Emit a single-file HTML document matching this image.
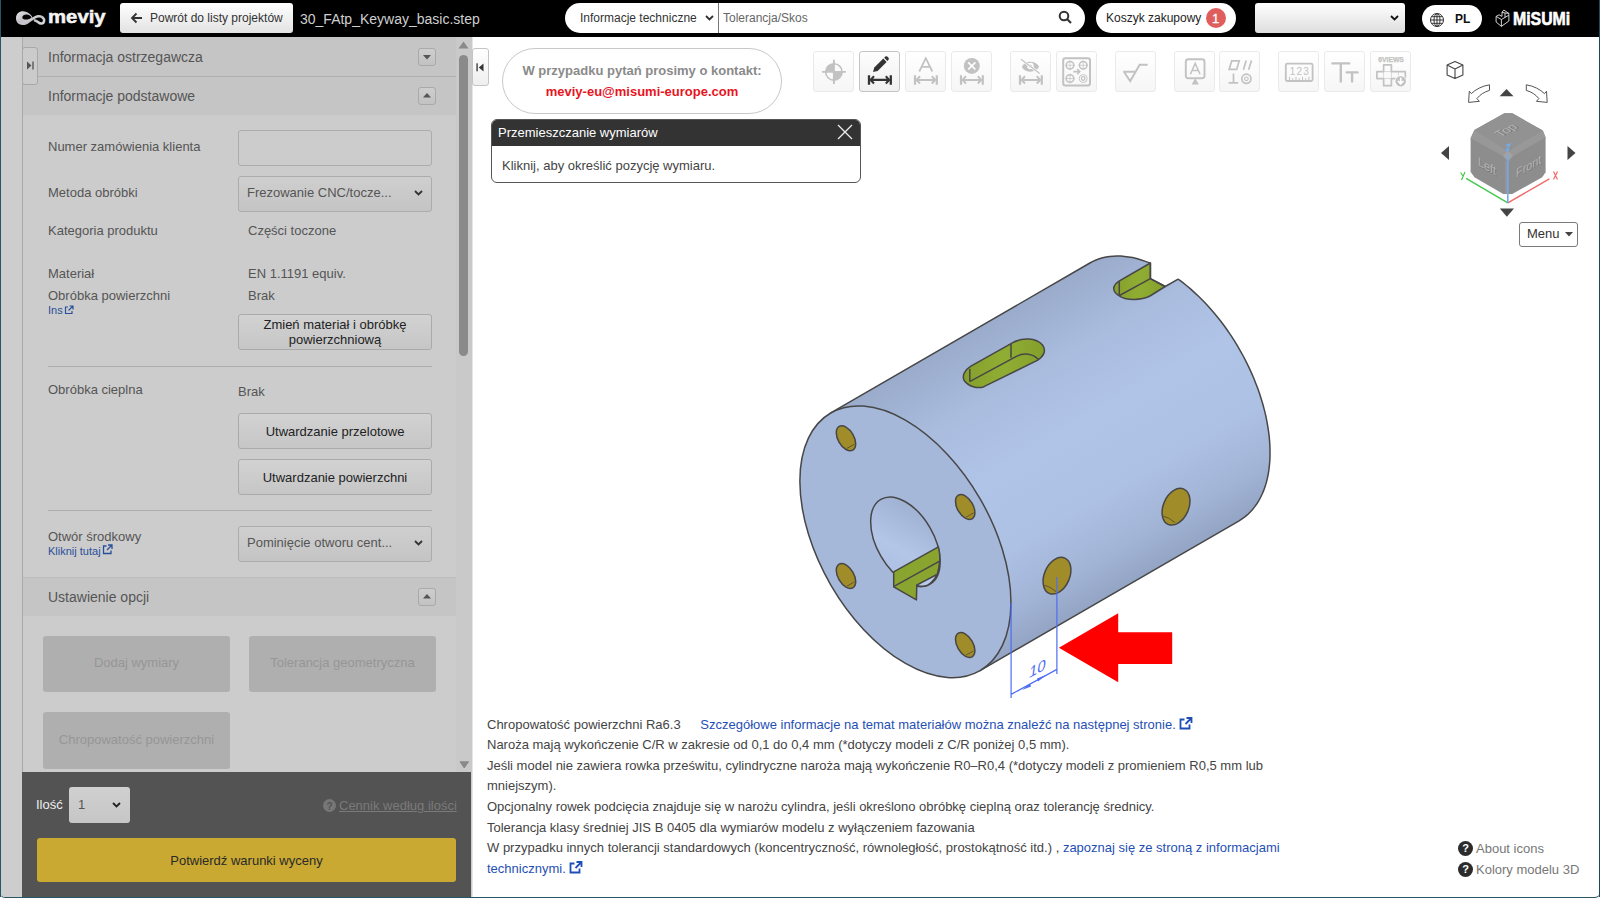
<!DOCTYPE html>
<html><head><meta charset="utf-8">
<style>
*{box-sizing:border-box;margin:0;padding:0}
html,body{width:1600px;height:900px;overflow:hidden;background:#fff;font-family:"Liberation Sans",sans-serif;font-size:13px;color:#333}
.a{position:absolute}
.t{position:absolute;white-space:nowrap;line-height:15px}
#frame{position:absolute;left:0;top:0;width:1600px;height:898px;background:#2a5566;border-radius:0 0 5px 5px}
#fl{position:absolute;left:0;top:0;width:1px;height:897px;background:#1f5a66}
#fr{position:absolute;left:1599px;top:0;width:1px;height:897px;background:#1f4a5a}
#app{position:absolute;left:0;top:0;width:1600px;height:897px;background:#fff;border-radius:0 0 5px 5px;overflow:hidden}
#hdr{position:absolute;left:0;top:0;width:1600px;height:37px;background:#000}
.pill{position:absolute;background:#fff;border-radius:16px}
.btn{position:absolute;border:1px solid #aaa;border-radius:3px;background:linear-gradient(#d2d2d2,#c6c6c6);text-align:center;color:#222}
.tb{position:absolute;top:51px;width:41px;height:41px;border:1px solid #eaeaea;border-radius:3px;background:linear-gradient(#fff,#f6f6f6)}
</style></head><body>
<div id="frame"></div>
<div id="app">
 <!-- HEADER -->
 <div id="hdr">
  <svg class="a" style="left:12px;top:6px" width="40" height="24" viewBox="12 6 40 24">
   <defs><linearGradient id="lg1" x1="0" y1="0" x2="1" y2="1"><stop offset="0" stop-color="#e6e6ea"/><stop offset=".5" stop-color="#c2c0c6"/><stop offset="1" stop-color="#dcdce0"/></linearGradient></defs>
   <path fill-rule="evenodd" fill="url(#lg1)" d="M16 18.2 C16 13.5 19.5 11.2 23 11.3 C27 11.4 30.5 14 32.3 17 C31 20.5 27.5 24.6 23.3 24.9 C19.3 25.2 16 22.5 16 18.2 Z M22.3 17.6 C22.3 15.6 24.5 14.5 26.5 14.6 C28.5 14.7 30.5 15.8 31.6 17.4 C30 18.8 28 19.6 26 19.6 C24 19.6 22.3 19 22.3 17.6 Z"/>
   <path d="M25 23.6 C29.5 22.5 33 16.5 38.7 16.3 C42.3 16.2 44.6 18.6 44.1 21.3 C43.6 23.8 40.5 24.2 38.3 22.3 C37.3 21.5 36.3 20.8 35 20.5" fill="none" stroke="url(#lg1)" stroke-width="2.6" stroke-linecap="round"/>
  </svg>
  <div class="t" style="left:47.5px;top:7.2px;font-size:18px;line-height:20px;font-weight:bold;color:#f4f4f4;transform:scaleX(1.13);transform-origin:left;-webkit-text-stroke:0.5px #f4f4f4">meviy</div>
  <div class="a" style="left:120px;top:3px;width:173px;height:30px;border-radius:3px;background:linear-gradient(#fff,#e2e2e2)"></div>
  <svg class="a" style="left:130px;top:12px" width="13" height="12" viewBox="0 0 13 12"><path d="M12 6H2M6.5 1.5L2 6l4.5 4.5" fill="none" stroke="#333" stroke-width="1.8"/></svg>
  <div class="t" style="left:150px;top:11px;font-size:12px;color:#333">Powrót do listy projektów</div>
  <div class="t" style="left:300px;top:11px;font-size:14px;line-height:16px;color:#cfcfcf">30_FAtp_Keyway_basic.step</div>
  <div class="pill" style="left:565px;top:2.5px;width:520px;height:30.5px;border-radius:15px"></div>
  <div class="t" style="left:580px;top:11px;font-size:12px;color:#333">Informacje techniczne</div>
  <svg class="a" style="left:705px;top:15px" width="9" height="6" viewBox="0 0 9 6"><path d="M1 1l3.5 3.5L8 1" fill="none" stroke="#333" stroke-width="1.8"/></svg>
  <div class="a" style="left:718px;top:3px;width:1px;height:30px;background:#777"></div>
  <div class="t" style="left:723px;top:11px;font-size:12px;color:#666">Tolerancja/Skos</div>
  <svg class="a" style="left:1058px;top:10px" width="15" height="14" viewBox="0 0 15 14"><circle cx="6" cy="6" r="4.3" fill="none" stroke="#333" stroke-width="2"/><path d="M9 9l4 4" stroke="#333" stroke-width="2.2"/></svg>
  <div class="pill" style="left:1095.5px;top:3px;width:140px;height:30px;border-radius:15px"></div>
  <div class="t" style="left:1106px;top:11px;font-size:12px;color:#222">Koszyk zakupowy</div>
  <div class="a" style="left:1205.5px;top:8px;width:20px;height:20px;border-radius:50%;background:#e05d5d"></div>
  <div class="t" style="left:1205.5px;top:10.5px;width:20px;text-align:center;font-size:13px;color:#fff;-webkit-text-stroke:0.3px #fff">1</div>
  <div class="a" style="left:1255px;top:3px;width:150px;height:30px;border-radius:3px;background:linear-gradient(#fff,#dedede)"></div>
  <svg class="a" style="left:1390px;top:15px" width="9" height="6" viewBox="0 0 9 6"><path d="M1 1l3.5 3.5L8 1" fill="none" stroke="#111" stroke-width="1.8"/></svg>
  <div class="pill" style="left:1422px;top:5px;width:60px;height:27px;border-radius:14px"></div>
  <svg class="a" style="left:1429px;top:12px" width="16" height="16" viewBox="0 0 16 16"><g fill="none" stroke="#333" stroke-width="1"><circle cx="8" cy="8" r="6.5"/><ellipse cx="8" cy="8" rx="3" ry="6.5"/><path d="M1.5 8h13M2.5 4.7h11M2.5 11.3h11M8 1.5v13"/></g></svg>
  <div class="t" style="left:1455px;top:12px;font-size:12px;line-height:14px;font-weight:bold;color:#111">PL</div>
  <svg class="a" style="left:1490px;top:5px" width="22" height="25" viewBox="1490 5 22 25"><g fill="none" stroke="#e8e8e8" stroke-width="0.9" stroke-linejoin="round"><path d="M1496.1 16.4L1499 14.8L1502 16.4V12.2L1503.8 10.1L1508.9 13.4V21L1501.4 26.4L1496.1 22Z"/><path d="M1496.1 16.4L1501.4 19.5V26.4M1501.4 19.5L1505 17.4V13M1502 12.2L1505 13L1508.9 13.4M1505 17.4L1508.9 15.2"/></g></svg>
  <div class="t" style="left:1512.5px;top:8.5px;font-size:18px;line-height:20px;font-weight:bold;color:#fff;transform:scaleX(0.88);transform-origin:left;-webkit-text-stroke:0.6px #fff">MiSUMi</div>
 </div>

 <!-- LEFT PANEL -->
 <div class="a" style="left:0;top:37px;width:472px;height:860px;background:#cdcdcd"></div>
 <div class="a" style="left:472px;top:37px;width:1px;height:860px;background:#e6e6e6"></div>
 <!-- section headers -->
 <div class="a" style="left:22px;top:37px;width:434px;height:39px;background:#c5c5c5"></div>
 <div class="a" style="left:22px;top:76px;width:434px;height:1px;background:#b0b0b0"></div>
 <div class="a" style="left:22px;top:77px;width:434px;height:38px;background:#c5c5c5"></div>
 <div class="a" style="left:22px;top:115px;width:434px;height:462px;background:#cccccc"></div>
 <div class="a" style="left:22px;top:577px;width:434px;height:1px;background:#bcbcbc"></div>
 <div class="a" style="left:22px;top:578px;width:434px;height:38px;background:#c5c5c5"></div>
 <div class="a" style="left:22px;top:616px;width:434px;height:156px;background:#cccccc"></div>
 <div class="a" style="left:22px;top:37px;width:1px;height:735px;background:#a9a9a9"></div>
 <!-- expand tab -->
 <div class="a" style="left:22px;top:47px;width:16px;height:38px;border:1px solid #a8a8a8;border-radius:3px;background:#cbcbcb"></div>
 <svg class="a" style="left:26px;top:61px" width="9" height="9" viewBox="0 0 9 9"><path d="M1 0.5L5.5 4.5L1 8.5z" fill="#555"/><rect x="6.2" y="0.5" width="1.6" height="8" fill="#666"/></svg>
 <div class="t" style="left:48px;top:49px;font-size:14px;line-height:16px;color:#555">Informacja ostrzegawcza</div>
 <div class="t" style="left:48px;top:88px;font-size:14px;line-height:16px;color:#555">Informacje podstawowe</div>
 <div class="a" style="left:418px;top:48px;width:18px;height:18px;border:1px solid #a9a9a9;border-radius:3px;background:linear-gradient(#cecece,#c2c2c2)"></div>
 <svg class="a" style="left:422px;top:55px" width="10" height="5" viewBox="0 0 10 5"><path d="M1 0H9L5 4.5z" fill="#555"/></svg>
 <div class="a" style="left:418px;top:87px;width:18px;height:18px;border:1px solid #a9a9a9;border-radius:3px;background:linear-gradient(#cecece,#c2c2c2)"></div>
 <svg class="a" style="left:422px;top:93px" width="10" height="5" viewBox="0 0 10 5"><path d="M1 4.5H9L5 0z" fill="#555"/></svg>
 <!-- basic info rows -->
 <div class="t" style="left:48px;top:139px;color:#555">Numer zamówienia klienta</div>
 <div class="a" style="left:238px;top:130px;width:194px;height:36px;border:1px solid #acacac;border-radius:3px;background:#cccccc"></div>
 <div class="t" style="left:48px;top:185px;color:#555">Metoda obróbki</div>
 <div class="a" style="left:238px;top:176px;width:194px;height:36px;border:1px solid #acacac;border-radius:3px;background:linear-gradient(#cfcfcf,#c4c4c4)"></div>
 <div class="t" style="left:247px;top:185px;color:#555">Frezowanie CNC/tocze...</div>
 <svg class="a" style="left:414px;top:190px" width="9" height="6" viewBox="0 0 9 6"><path d="M1 1l3.5 3.5L8 1" fill="none" stroke="#333" stroke-width="1.8"/></svg>
 <div class="t" style="left:48px;top:223px;color:#555">Kategoria produktu</div>
 <div class="t" style="left:248px;top:223px;color:#555">Części toczone</div>
 <div class="t" style="left:48px;top:266px;color:#555">Materiał</div>
 <div class="t" style="left:248px;top:266px;color:#555">EN 1.1191 equiv.</div>
 <div class="t" style="left:48px;top:288px;color:#555">Obróbka powierzchni</div>
 <div class="t" style="left:248px;top:288px;color:#555">Brak</div>
 <div class="t" style="left:48px;top:304px;font-size:11px;line-height:13px;color:#2a4f9a">Ins</div>
 <svg class="a" style="left:64px;top:305px" width="10" height="10" viewBox="0 0 10 10"><g fill="none" stroke="#2a4f9a" stroke-width="1.2"><path d="M4 2H1.5v6.5H8V6"/><path d="M5.5 1H9v3.5M9 1L4.5 5.5"/></g></svg>
 <div class="btn" style="left:238px;top:314px;width:194px;height:36px;line-height:15px;padding-top:2px">Zmień materiał i obróbkę<br>powierzchniową</div>
 <div class="a" style="left:48px;top:366px;width:384px;height:1px;background:#adadad"></div>
 <div class="t" style="left:48px;top:382px;color:#555">Obróbka cieplna</div>
 <div class="t" style="left:238px;top:384px;color:#555">Brak</div>
 <div class="btn" style="left:238px;top:413px;width:194px;height:36px;line-height:36px">Utwardzanie przelotowe</div>
 <div class="btn" style="left:238px;top:459px;width:194px;height:36px;line-height:36px">Utwardzanie powierzchni</div>
 <div class="a" style="left:48px;top:510px;width:384px;height:1px;background:#adadad"></div>
 <div class="t" style="left:48px;top:529px;color:#555">Otwór środkowy</div>
 <div class="t" style="left:48px;top:545px;font-size:11px;line-height:13px;color:#2a4f9a">Kliknij tutaj</div>
 <svg class="a" style="left:102px;top:544px" width="11" height="11" viewBox="0 0 11 11"><g fill="none" stroke="#2a4f9a" stroke-width="1.3"><path d="M4.5 2H1.5v7.5H9V6.5"/><path d="M6 1H10v4M10 1L5 6"/></g></svg>
 <div class="a" style="left:238px;top:526px;width:194px;height:36px;border:1px solid #acacac;border-radius:3px;background:linear-gradient(#cfcfcf,#c4c4c4)"></div>
 <div class="t" style="left:247px;top:535px;color:#555">Pominięcie otworu cent...</div>
 <svg class="a" style="left:414px;top:540px" width="9" height="6" viewBox="0 0 9 6"><path d="M1 1l3.5 3.5L8 1" fill="none" stroke="#333" stroke-width="1.8"/></svg>
 <div class="t" style="left:48px;top:589px;font-size:14px;line-height:16px;color:#555">Ustawienie opcji</div>
 <div class="a" style="left:418px;top:588px;width:18px;height:18px;border:1px solid #a9a9a9;border-radius:3px;background:linear-gradient(#cecece,#c2c2c2)"></div>
 <svg class="a" style="left:422px;top:594px" width="10" height="5" viewBox="0 0 10 5"><path d="M1 4.5H9L5 0z" fill="#555"/></svg>
 <div class="a" style="left:43px;top:636px;width:187px;height:56px;border-radius:3px;background:#afafaf"></div>
 <div class="t" style="left:43px;top:655px;width:187px;text-align:center;color:#969696">Dodaj wymiary</div>
 <div class="a" style="left:249px;top:636px;width:187px;height:56px;border-radius:3px;background:#afafaf"></div>
 <div class="t" style="left:249px;top:655px;width:187px;text-align:center;color:#969696">Tolerancja geometryczna</div>
 <div class="a" style="left:43px;top:712px;width:187px;height:57px;border-radius:3px;background:#afafaf"></div>
 <div class="t" style="left:43px;top:732px;width:187px;text-align:center;color:#969696">Chropowatość powierzchni</div>
 <!-- scrollbar -->
 <div class="a" style="left:456px;top:37px;width:16px;height:735px;background:#c9c9c9"></div>
 <svg class="a" style="left:458px;top:41px" width="11" height="8" viewBox="0 0 11 8"><path d="M0.5 7.5H10.5L5.5 0.5z" fill="#8a8a8a"/></svg>
 <div class="a" style="left:459px;top:55px;width:9px;height:301px;border-radius:5px;background:#8a8a8a"></div>
 <svg class="a" style="left:458.5px;top:761px" width="11" height="8" viewBox="0 0 11 8"><path d="M1 0.8H9.5L5.25 7z" fill="#8a8a8a" stroke="#8a8a8a" stroke-width="1" stroke-linejoin="round"/></svg>
 <!-- footer -->
 <div class="a" style="left:22px;top:772px;width:449px;height:125px;background:#535353"></div>
 <div class="t" style="left:36px;top:797px;color:#eee">Ilość</div>
 <div class="a" style="left:69px;top:787px;width:61px;height:36px;border-radius:3px;background:linear-gradient(#d0d0d0,#c6c6c6)"></div>
 <div class="t" style="left:78px;top:797px;color:#555">1</div>
 <svg class="a" style="left:112px;top:802px" width="9" height="6" viewBox="0 0 9 6"><path d="M1 1l3.5 3.5L8 1" fill="none" stroke="#222" stroke-width="1.8"/></svg>
 <div class="a" style="left:323px;top:799px;width:13px;height:13px;border-radius:50%;background:#777"></div>
 <div class="t" style="left:323px;top:798.5px;width:13px;text-align:center;font-size:10px;font-weight:bold;color:#535353">?</div>
 <div class="t" style="left:339px;top:798px;color:#7a7a7a;text-decoration:underline">Cennik według ilości</div>
 <div class="a" style="left:37px;top:838px;width:419px;height:44px;border-radius:3px;background:#c9a931"></div>
 <div class="t" style="left:37px;top:853px;width:419px;text-align:center;color:#2a2a2a">Potwierdź warunki wyceny</div>

 <!-- MAIN -->
 <div class="a" style="left:472px;top:48px;width:16.5px;height:38px;border:1px solid #c4c4c4;border-radius:3px;background:linear-gradient(#fff,#efefef)"></div>
 <svg class="a" style="left:476px;top:62.5px" width="9" height="9" viewBox="0 0 9 9"><rect x="0.3" y="0.3" width="1.6" height="8" fill="#555"/><path d="M7.5 0.5L2.8 4.5L7.5 8.5z" fill="#333"/></svg>
 <div class="a" style="left:502px;top:48px;width:280px;height:66px;border:1px solid #c8c8c8;border-radius:33px;background:#fff"></div>
 <div class="t" style="left:502px;top:63px;width:280px;text-align:center;font-weight:bold;color:#8a8a8a">W przypadku pytań prosimy o kontakt:</div>
 <div class="t" style="left:502px;top:84px;width:280px;text-align:center;font-weight:bold;color:#e8141e">meviy-eu@misumi-europe.com</div>
 <!-- popup -->
 <div class="a" style="left:491px;top:119px;width:370px;height:64px;border:1px solid #555;border-radius:6px;background:#fff;overflow:hidden">
  <div class="a" style="left:0;top:0;width:370px;height:26px;background:#333"></div>
 </div>
 <div class="t" style="left:498px;top:125px;color:#fff">Przemieszczanie wymiarów</div>
 <svg class="a" style="left:837px;top:124px" width="16" height="16" viewBox="0 0 16 16"><path d="M1 1L15 15M15 1L1 15" stroke="#eee" stroke-width="1.3"/></svg>
 <div class="t" style="left:502px;top:158px;color:#444">Kliknij, aby określić pozycję wymiaru.</div>
 <!-- toolbar -->
 <div class="tb" style="left:813px"></div>
 <div class="tb" style="left:859px;border-color:#c4c4c4;background:linear-gradient(#fdfdfd,#f0f0f0)"></div>
 <div class="tb" style="left:905px"></div>
 <div class="tb" style="left:951px"></div>
 <div class="tb" style="left:1010px"></div>
 <div class="tb" style="left:1056px"></div>
 <div class="tb" style="left:1115px"></div>
 <div class="tb" style="left:1174px"></div>
 <div class="tb" style="left:1219px"></div>
 <div class="tb" style="left:1278px"></div>
 <div class="tb" style="left:1324px"></div>
 <div class="tb" style="left:1370px"></div>
 <!-- ICONS --><svg class="a" style="left:813px;top:51px" width="41" height="41" viewBox="0 0 41 41"><path d="M20.9 12.7A8.2 8.2 0 0 0 12.7 20.9H20.9Z M20.9 29.1A8.2 8.2 0 0 0 29.1 20.9H20.9Z" fill="#c2c2c2"/><circle cx="20.9" cy="20.9" r="8.2" fill="none" stroke="#c2c2c2" stroke-width="1.6"/><path d="M9 20.9H32.9M20.9 8.8V32.9" stroke="#c2c2c2" stroke-width="1.9"/></svg>
<svg class="a" style="left:859px;top:51px" width="41" height="41" viewBox="0 0 41 41"><path d="M14 21 L15.3 16.6 L24.3 7.6 L27.6 10.9 L18.6 19.9 Z" fill="#333"/><path d="M25.2 6.7 L26.3 5.6 Q27.3 4.8 28.3 5.6 L29.5 6.8 Q30.3 7.8 29.5 8.8 L28.4 9.9 Z" fill="#333"/><path d="M10 24.2V33.7M31.8 24.2V33.7" stroke="#333" stroke-width="2.3000000000000003"/><path d="M11.5 28.9H30.3M15 25.3L11.6 28.9L15 32.5M26.8 25.3L30.2 28.9L26.8 32.5" fill="none" stroke="#333" stroke-width="2.1"/></svg>
<svg class="a" style="left:905px;top:51px" width="41" height="41" viewBox="0 0 41 41"><path d="M14.3 20.5L20.8 7.2L27.3 20.5M16.6 15.9H25" fill="none" stroke="#c2c2c2" stroke-width="1.8"/><path d="M10 24.2V33.7M31.8 24.2V33.7" stroke="#c2c2c2" stroke-width="2.2"/><path d="M11.5 28.9H30.3M15 25.3L11.6 28.9L15 32.5M26.8 25.3L30.2 28.9L26.8 32.5" fill="none" stroke="#c2c2c2" stroke-width="2"/></svg>
<svg class="a" style="left:951px;top:51px" width="41" height="41" viewBox="0 0 41 41"><circle cx="20.8" cy="14.9" r="8" fill="#c2c2c2"/><path d="M17.2 11.3L24.4 18.5M24.4 11.3L17.2 18.5" stroke="#fff" stroke-width="1.7"/><path d="M10 24.2V33.7M31.8 24.2V33.7" stroke="#c2c2c2" stroke-width="2.2"/><path d="M11.5 28.9H30.3M15 25.3L11.6 28.9L15 32.5M26.8 25.3L30.2 28.9L26.8 32.5" fill="none" stroke="#c2c2c2" stroke-width="2"/></svg>
<svg class="a" style="left:1010px;top:51px" width="41" height="41" viewBox="0 0 41 41"><path d="M12 16 C14 9 26 9 29 15.5 C27 21 17 23 12.5 17 Z" fill="#c2c2c2"/><circle cx="20.5" cy="15" r="3.2" fill="#fff"/><circle cx="20.5" cy="15" r="1.6" fill="#c2c2c2"/><path d="M11 8.3L29.7 22.5" stroke="#fff" stroke-width="2.6"/><path d="M11 8.3L29.7 22.5" stroke="#c2c2c2" stroke-width="1.2"/><path d="M10 24.2V33.7M31.8 24.2V33.7" stroke="#c2c2c2" stroke-width="2.2"/><path d="M11.5 28.9H30.3M15 25.3L11.6 28.9L15 32.5M26.8 25.3L30.2 28.9L26.8 32.5" fill="none" stroke="#c2c2c2" stroke-width="2"/></svg>
<svg class="a" style="left:1056px;top:51px" width="41" height="41" viewBox="0 0 41 41"><rect x="7.2" y="7.2" width="26.8" height="27.2" rx="2.2" fill="none" stroke="#c2c2c2" stroke-width="2"/><circle cx="14" cy="14.3" r="3.8" fill="none" stroke="#c2c2c2" stroke-width="1.5"/><path d="M9.2 14.3H18.8M14 9.5V19.1" stroke="#c2c2c2" stroke-width="0.7"/><circle cx="27.2" cy="14.3" r="3.8" fill="none" stroke="#c2c2c2" stroke-width="1.5"/><path d="M22.4 14.3H32.0M27.2 9.5V19.1" stroke="#c2c2c2" stroke-width="0.7"/><circle cx="14" cy="27.5" r="3.8" fill="none" stroke="#c2c2c2" stroke-width="1.5"/><path d="M9.2 27.5H18.8M14 22.7V32.3" stroke="#c2c2c2" stroke-width="0.7"/><circle cx="27.2" cy="27.5" r="4" fill="none" stroke="#c2c2c2" stroke-width="0.9"/><circle cx="27.2" cy="27.5" r="1.8" fill="none" stroke="#c2c2c2" stroke-width="1.3"/><path d="M17.3 20.6H23.6M21.2 18L23.8 20.6L21.2 23.2" fill="none" stroke="#c2c2c2" stroke-width="1.6"/></svg>
<svg class="a" style="left:1115px;top:51px" width="41" height="41" viewBox="0 0 41 41"><path d="M8.2 20.8H20M8.9 20.8L15.2 30.1L24.7 13.8H32.7" fill="none" stroke="#c2c2c2" stroke-width="1.9" stroke-linejoin="miter"/></svg>
<svg class="a" style="left:1174px;top:51px" width="41" height="41" viewBox="0 0 41 41"><rect x="11.8" y="8.3" width="18.7" height="18.9" rx="2.5" fill="none" stroke="#c2c2c2" stroke-width="1.9"/><path d="M16.4 23.2L21.2 12.4L26.1 23.2M18 19.5H24.5" fill="none" stroke="#c2c2c2" stroke-width="1.5"/><path d="M21.2 27.2L17.6 33.5H24.9Z" fill="#c2c2c2"/></svg>
<svg class="a" style="left:1219px;top:51px" width="41" height="41" viewBox="0 0 41 41"><path d="M10.2 18.3L12.7 9.9H20.2L17.7 18.3Z" fill="none" stroke="#c2c2c2" stroke-width="1.7"/><path d="M24.4 18.7L27.2 9.6M29.6 18.7L32.5 9.6M14.5 22.5V31.9M9.6 31.9H19.2" stroke="#c2c2c2" stroke-width="1.7"/><circle cx="27.4" cy="27.8" r="4.6" fill="none" stroke="#c2c2c2" stroke-width="1.7"/><circle cx="27.4" cy="27.8" r="1.8" fill="none" stroke="#c2c2c2" stroke-width="1.2"/></svg>
<svg class="a" style="left:1278px;top:51px" width="41" height="41" viewBox="0 0 41 41"><rect x="7.8" y="12.6" width="26.8" height="17.4" rx="1.5" fill="none" stroke="#c2c2c2" stroke-width="1.8"/><text x="21.2" y="23.6" text-anchor="middle" font-family="Liberation Sans" font-size="10" fill="#c2c2c2" textLength="19" lengthAdjust="spacing">123</text><path d="M11.5 29V25.8M14.7 29V27.3M18 29V25.8M21.2 29V27.3M24.5 29V25.8M27.7 29V27.3M30.9 29V25.8" stroke="#c2c2c2" stroke-width="1"/></svg>
<svg class="a" style="left:1324px;top:51px" width="41" height="41" viewBox="0 0 41 41"><path d="M8.5 12.4H25.2M16.8 12.4V30.6M22.7 21.4H33.6M28.1 21.4V30.6" fill="none" stroke="#c2c2c2" stroke-width="2.4" stroke-linecap="round"/></svg>
<svg class="a" style="left:1370px;top:51px" width="41" height="41" viewBox="0 0 41 41"><text x="21" y="10.9" text-anchor="middle" font-family="Liberation Sans" font-weight="bold" font-size="6.8" fill="#c2c2c2" stroke="#c2c2c2" stroke-width="0.25" textLength="25.5" lengthAdjust="spacingAndGlyphs">6VIEWS</text><path d="M13.6 13.9H21.4V20.6H35.3V27.6H21.4V34.7H13.6V27.6H6.9V20.6H13.6Z" fill="none" stroke="#c2c2c2" stroke-width="1.7" stroke-linejoin="round"/><path d="M13.6 20.6V27.6M21.4 20.6V27.6M28.4 20.6V27.6M13.6 20.6H21.4M13.6 27.6H21.4" stroke="#c2c2c2" stroke-width="0.6"/><circle cx="30.7" cy="30.2" r="6" fill="#fff"/><circle cx="30.7" cy="30.2" r="5.3" fill="#c2c2c2"/><path d="M30.7 26.6V32.6M27.9 30L30.7 32.8L33.5 30" fill="none" stroke="#fff" stroke-width="1.7"/></svg>
<svg class="a" style="left:1430px;top:50px" width="160" height="175" viewBox="1430 50 160 175">
<path d="M1455 61.4L1462.9 65.1V74.9L1455 78.6L1447.1 74.9V65.1Z M1447.1 65.1L1455 68.9L1462.9 65.1M1455 68.9V78.6" fill="none" stroke="#444" stroke-width="1.1" stroke-linejoin="round"/>
<path d="M1499.6 96.3H1513.5L1506.5 89.1Z" fill="#444"/>
<path d="M1499.8 208.5H1514L1506.9 216.8Z" fill="#444"/>
<path d="M1449 146V160L1441 153Z" fill="#444"/>
<path d="M1567.5 146V160L1575.5 153Z" fill="#444"/>
<path d="M1489.5 84.8 C1482 86 1475.5 89.5 1471.3 93.6 L1469.3 91.2 L1468.6 102.4 L1479.4 101.3 L1476.9 98.6 C1480 94.6 1484.5 91.8 1489.5 90.4 Z" fill="#fff" stroke="#555" stroke-width="1"/>
<path d="M1526.3 84.8 C1533.8 86 1540.3 89.5 1544.5 93.6 L1546.5 91.2 L1547.2 102.4 L1536.4 101.3 L1538.9 98.6 C1535.8 94.6 1531.3 91.8 1526.3 90.4 Z" fill="#fff" stroke="#555" stroke-width="1"/>
<path d="M1504.4 113.3H1512.3L1542.8 130.5L1545.6 137.6V172.3L1542.2 177.2L1512.2 194H1503.3L1474.4 177.2L1470.6 171.7V138.3L1474.4 130Z" fill="#8d8d8d"/>
<path d="M1504.4 113.3H1512.3L1542.8 130.5L1512 148.5H1504L1474.4 130Z" fill="#929292"/>
<path d="M1474.4 130L1504 148.5L1508 153L1512 148.5L1542.8 130.5L1545.6 137.6L1513 156L1508 161L1503 156L1470.6 138.3Z" fill="#989898"/>
<path d="M1503 156L1508 161L1513 156L1508 150Z" fill="#a2a2a2"/>
<path d="M1506.5 161V194" stroke="#959595" stroke-width="3"/>
<g transform="matrix(0.866,-0.5,0.866,0.5,1509.8,132.2)"><text x="0.7" y="0.7" text-anchor="middle" font-family="Liberation Sans" font-size="12.5" fill="#747474">Top</text><text x="0" y="0" text-anchor="middle" font-family="Liberation Sans" font-size="12.5" fill="#b4b4b4">Top</text></g>
<g transform="matrix(0.866,0.5,0,1,1487,170.4)"><text x="0.7" y="0.7" text-anchor="middle" font-family="Liberation Sans" font-size="12.5" fill="#747474">Left</text><text x="0" y="0" text-anchor="middle" font-family="Liberation Sans" font-size="12.5" fill="#b4b4b4">Left</text></g>
<g transform="matrix(0.866,-0.5,0,1,1528.7,170.4)"><text x="0.7" y="0.7" text-anchor="middle" font-family="Liberation Sans" font-size="12.5" fill="#747474">Front</text><text x="0" y="0" text-anchor="middle" font-family="Liberation Sans" font-size="12.5" fill="#b4b4b4">Front</text></g>
<path d="M1507.8 202.8L1466.1 178.3" stroke="#46c94e" stroke-width="1.5"/>
<path d="M1507.8 202.8L1549.4 178.9" stroke="#f06a6a" stroke-width="1.5"/>
<path d="M1507.8 202.8V155" stroke="#74a9ec" stroke-width="1.6"/>
<path d="M1506 145.5L1510 144.3L1506 150.5L1510 149.3" fill="none" stroke="#74a9ec" stroke-width="1.4"/>
<path d="M1460.6 172.5L1463 176M1465 172L1461.5 180" fill="none" stroke="#46c94e" stroke-width="1.2"/>
<path d="M1553.5 171.5L1557.5 179.5M1557.5 171.5L1553.5 179.5" fill="none" stroke="#f06a6a" stroke-width="1.2"/>
</svg><!-- /ICONS -->
 <!-- view cube -->
 <div class="a" style="left:1519px;top:222px;width:59px;height:25px;border:1px solid #7a7a7a;border-radius:3px;background:#fff"></div>
 <div class="t" style="left:1527px;top:226px;color:#333">Menu</div>
 <svg class="a" style="left:1565px;top:232px" width="8" height="5" viewBox="0 0 8 5"><path d="M0 0H8L4 4.6z" fill="#444"/></svg>
 <!-- MODEL --><svg class="a" style="left:0;top:0" width="1600" height="900"><defs><linearGradient id="bg" gradientUnits="userSpaceOnUse" x1="830.8" y1="412.9" x2="979.9" y2="670.7"><stop offset="0" stop-color="#9aabcb"/><stop offset="0.22" stop-color="#a9bcde"/><stop offset="0.45" stop-color="#b0c4e8"/><stop offset="0.7" stop-color="#adc1e4"/><stop offset="0.88" stop-color="#a2b4d6"/><stop offset="1" stop-color="#93a4c4"/></linearGradient><linearGradient id="bore" x1="0" y1="0" x2="1" y2="1"><stop offset="0" stop-color="#9aabcb"/><stop offset=".6" stop-color="#b3c6e8"/><stop offset="1" stop-color="#aabde0"/></linearGradient><linearGradient id="gr" x1="0" y1="0" x2="1" y2="0"><stop offset="0" stop-color="#86a02c"/><stop offset=".5" stop-color="#90ad33"/><stop offset="1" stop-color="#84a02c"/></linearGradient></defs><path d="M830.8,412.9 L1089.9,263.0 L1092.9,261.4 L1096.1,260.0 L1099.3,258.8 L1102.7,257.8 L1106.1,257.1 L1109.6,256.5 L1113.3,256.2 L1117.0,256.0 L1120.8,256.1 L1124.6,256.4 L1128.5,256.9 L1132.5,257.6 L1136.5,258.6 L1140.6,259.7 L1144.7,261.1 L1148.8,262.6 L1153.0,264.4 L1157.2,266.4 L1161.4,268.5 L1165.6,270.9 L1169.8,273.5 L1174.0,276.2 L1178.1,279.1 L1182.3,282.2 L1186.4,285.5 L1190.5,288.9 L1194.5,292.6 L1198.5,296.3 L1202.5,300.2 L1206.4,304.3 L1210.2,308.5 L1213.9,312.8 L1217.6,317.3 L1221.2,321.8 L1224.7,326.5 L1228.1,331.3 L1231.4,336.2 L1234.6,341.2 L1237.6,346.2 L1240.6,351.4 L1243.5,356.5 L1246.2,361.8 L1248.8,367.1 L1251.2,372.4 L1253.6,377.8 L1255.7,383.2 L1257.8,388.6 L1259.7,394.0 L1261.4,399.4 L1263.0,404.7 L1264.4,410.1 L1265.7,415.4 L1266.8,420.8 L1267.7,426.0 L1268.5,431.2 L1269.2,436.3 L1269.6,441.4 L1269.9,446.4 L1270.0,451.3 L1270.0,456.1 L1269.8,460.8 L1269.4,465.4 L1268.9,469.9 L1268.2,474.3 L1267.3,478.5 L1266.3,482.6 L1265.1,486.6 L1263.7,490.4 L1262.2,494.0 L1260.5,497.5 L1258.7,500.8 L1256.7,504.0 L1254.6,506.9 L1252.4,509.7 L1250.0,512.3 L1247.5,514.7 L1244.8,516.9 L1242.0,518.9 L1239.1,520.8 L980.0,670.7 Z" fill="url(#bg)" stroke="#474747" stroke-width="1.5" stroke-linejoin="round"/><ellipse cx="905.4" cy="541.8" rx="148.9" ry="86.2" transform="rotate(59.9 905.4 541.8)" fill="#a6b8da" stroke="#474747" stroke-width="1.5" stroke-linejoin="round"/><ellipse cx="846" cy="438.3" rx="13.70" ry="7.93" transform="rotate(59.9 846 438.3)" fill="#a08c28" stroke="#474747" stroke-width="1.5" stroke-linejoin="round"/><path d="M847,448.3 Q851,446.3 854.5,444.1" fill="none" stroke="#5a5030" stroke-width="0.9"/><ellipse cx="965.2" cy="507" rx="13.70" ry="7.93" transform="rotate(59.9 965.2 507)" fill="#a08c28" stroke="#474747" stroke-width="1.5" stroke-linejoin="round"/><path d="M966.2,517 Q970.2,515 973.7,512.8" fill="none" stroke="#5a5030" stroke-width="0.9"/><ellipse cx="846" cy="576" rx="13.70" ry="7.93" transform="rotate(59.9 846 576)" fill="#a08c28" stroke="#474747" stroke-width="1.5" stroke-linejoin="round"/><path d="M847,586 Q851,584 854.5,581.8" fill="none" stroke="#5a5030" stroke-width="0.9"/><ellipse cx="965.2" cy="645" rx="13.70" ry="7.93" transform="rotate(59.9 965.2 645)" fill="#a08c28" stroke="#474747" stroke-width="1.5" stroke-linejoin="round"/><path d="M966.2,655 Q970.2,653 973.7,650.8" fill="none" stroke="#5a5030" stroke-width="0.9"/><ellipse cx="905.4" cy="541.8" rx="49.00" ry="28.37" transform="rotate(59.9 905.4 541.8)" fill="url(#bore)" stroke="#474747" stroke-width="1.5" stroke-linejoin="round"/><path d="M893.7,571.8 L938.4,546.9 Q940.5,556 939.5,562 Q939,569 937.3,574.3 L916.8,585.1 L916.4,599.9 L893.7,586.9 Z" fill="#8aa52f" stroke="#474747" stroke-width="1.5" stroke-linejoin="round"/><path d="M916.8,585.1 Q925,588.5 931.2,582.6 Q935,579 937.3,574.3 Z" fill="#b9cbeb" stroke="#474747" stroke-width="1.5" stroke-linejoin="round"/><path d="M894.4,586.2 L939.2,561.3" fill="none" stroke="#474747" stroke-width="1.5" stroke-linejoin="round"/><ellipse cx="1176" cy="506.7" rx="19.3" ry="12.6" transform="rotate(-66 1176 506.7)" fill="#a08c28" stroke="#474747" stroke-width="1.5" stroke-linejoin="round"/><path d="M1162,515.7 Q1170,517.7 1175,522.7" fill="none" stroke="#5a5030" stroke-width="0.9"/><ellipse cx="1057" cy="575.7" rx="19.3" ry="12.6" transform="rotate(-66 1057 575.7)" fill="#a08c28" stroke="#474747" stroke-width="1.5" stroke-linejoin="round"/><path d="M1043,584.7 Q1051,586.7 1056,591.7" fill="none" stroke="#5a5030" stroke-width="0.9"/><path d="M970.9,366.1 L1012.8,342.6 C1022,337.5 1036,337.5 1042.5,345 C1047,351 1043,357 1037.3,360.3 L983.9,386.7 C977.5,389 968.5,386.5 964.2,380.5 C961.8,376 964.5,370 970.9,366.1 Z" fill="url(#gr)" stroke="#474747" stroke-width="1.5" stroke-linejoin="round"/><path d="M969.6,381.6 L1016.4,356.4 C1024,352.5 1033,353.5 1038,359.2 M969.8,369 L969.8,381.6 M1011,344 L1011,357.8" fill="none" stroke="#474747" stroke-width="1.5" stroke-linejoin="round"/><path d="M1150.4,262 L1150.4,278.6 L1165.2,286.5 L1178.6,278.9 L1182,277 L1160,250 Z" fill="#fff" stroke="none"/><path d="M1150.4,263 L1119,281.1 C1112,285.5 1111.5,292 1120.4,296.6 C1127,300.5 1141,300.5 1150,296 L1165.2,286.5 L1150.4,278.6 Z" fill="url(#gr)" stroke="#474747" stroke-width="1.5" stroke-linejoin="round"/><path d="M1150.4,262.5 L1150.4,278.6 L1165.2,286.5 L1178.6,278.9 M1119.5,295.5 L1150.4,278.6 M1119.3,281.5 L1119.3,295.5" fill="none" stroke="#474747" stroke-width="1.5" stroke-linejoin="round"/><path d="M1011.1,603 L1011.1,698 M1056.9,577 L1056.9,674 M1011.1,694.4 L1056.9,669.4" stroke="#4d6ef2" stroke-width="1.2" fill="none"/><path d="M1022,690 L1030,683.5 L1031,686.5 Z M1046,675 L1038,681.5 L1037,678.5 Z" fill="#4d6ef2"/><text x="0" y="0" transform="translate(1028.5,678.5) skewY(-29) skewX(-8)" font-family="Liberation Sans" font-size="15" fill="#4d6ef2">10</text><path d="M1058.9,647.8 L1118.2,613.3 L1118.2,632.2 L1172.2,632.2 L1172.2,664 L1118.2,664 L1118.2,682.2 Z" fill="#ff0000"/></svg><!-- /MODEL -->
 <!-- bottom text -->
 <div class="a" style="left:487px;top:714.7px;width:900px;line-height:20.6px;color:#444;white-space:nowrap">
  <div>Chropowatość powierzchni Ra6.3 <span style="display:inline-block;width:16px"></span><span style="color:#1f4fb4">Szczegółowe informacje na temat materiałów można znaleźć na następnej stronie. </span><svg width="14" height="13" viewBox="0 0 14 13" style="vertical-align:-1px"><g fill="none" stroke="#1f4fb4" stroke-width="1.8"><path d="M5.5 2.5H1.5v9h9V7.5"/><path d="M7.5 1H12.5v5M12.5 1L6.5 7"/></g></svg></div>
  <div>Naroża mają wykończenie C/R w zakresie od 0,1 do 0,4 mm (*dotyczy modeli z C/R poniżej 0,5 mm).</div>
  <div>Jeśli model nie zawiera rowka prześwitu, cylindryczne naroża mają wykończenie R0–R0,4 (*dotyczy modeli z promieniem R0,5 mm lub</div>
  <div>mniejszym).</div>
  <div>Opcjonalny rowek podcięcia znajduje się w narożu cylindra, jeśli określono obróbkę cieplną oraz tolerancję średnicy.</div>
  <div>Tolerancja klasy średniej JIS B 0405 dla wymiarów modelu z wyłączeniem fazowania</div>
  <div>W przypadku innych tolerancji standardowych (koncentryczność, równoległość, prostokątność itd.) , <span style="color:#1f4fb4">zapoznaj się ze stroną z informacjami</span></div>
  <div><span style="color:#1f4fb4">technicznymi. </span><svg width="14" height="13" viewBox="0 0 14 13" style="vertical-align:-1px"><g fill="none" stroke="#1f4fb4" stroke-width="1.8"><path d="M5.5 2.5H1.5v9h9V7.5"/><path d="M7.5 1H12.5v5M12.5 1L6.5 7"/></g></svg></div>
 </div>
 <div class="a" style="left:1458px;top:841px;width:15px;height:15px;border-radius:50%;background:#2b2b2b"></div>
 <div class="t" style="left:1458px;top:841px;width:15px;text-align:center;font-size:11px;font-weight:bold;color:#fff">?</div>
 <div class="t" style="left:1476px;top:841px;color:#777">About icons</div>
 <div class="a" style="left:1458px;top:862px;width:15px;height:15px;border-radius:50%;background:#2b2b2b"></div>
 <div class="t" style="left:1458px;top:862px;width:15px;text-align:center;font-size:11px;font-weight:bold;color:#fff">?</div>
 <div class="t" style="left:1476px;top:862px;color:#777">Kolory modelu 3D</div>
</div>
<div id="fl"></div><div id="fr"></div>
</body></html>
